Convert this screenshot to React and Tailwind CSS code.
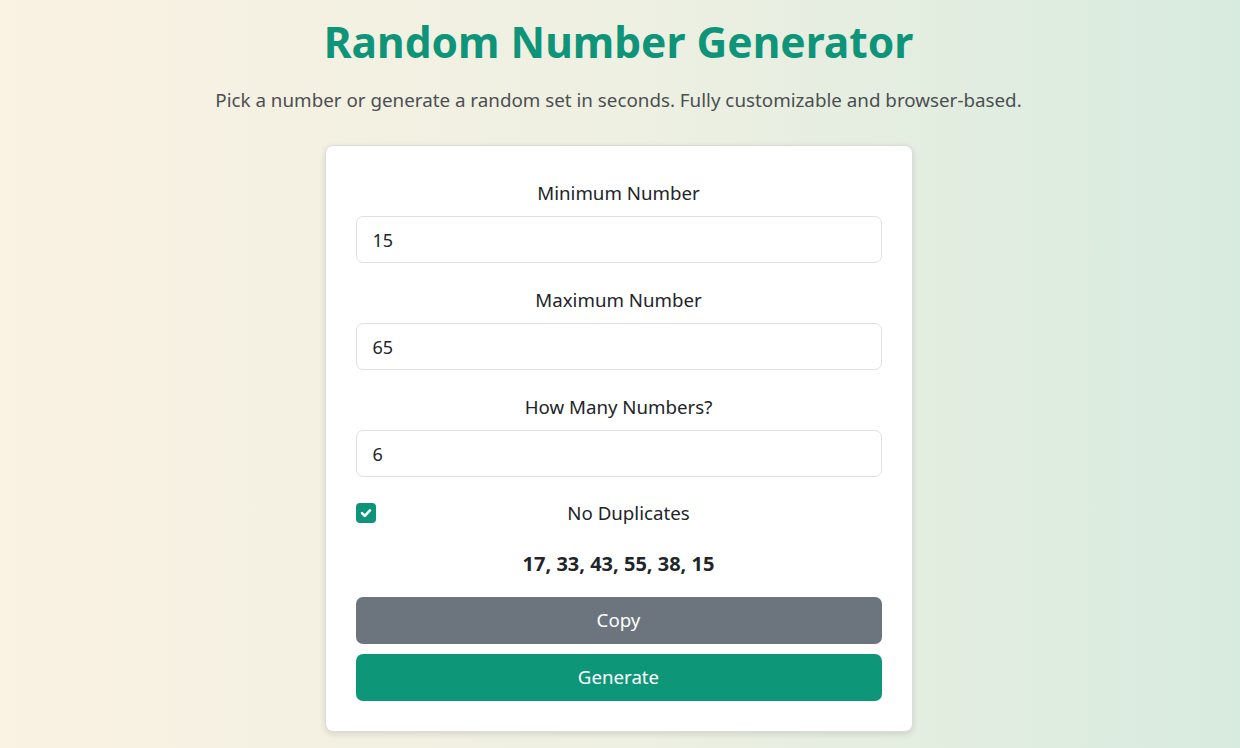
import React, { useState } from 'react';

function Field({ label, value, onChange }) {
  return (
    <div className="flex flex-col">
      <label className="text-center text-[18.7px] leading-[27px] text-[#212529] mb-[10px]">{label}</label>
      <input
        type="number"
        value={value}
        onChange={(e) => onChange(e.target.value)}
        className="h-[47px] w-full px-4 text-[18px] text-[#212529] bg-white border border-[#dee2e6] rounded-[7px] focus:outline-none"
      />
    </div>
  );
}

export default function App() {
  const [min, setMin] = useState('15');
  const [max, setMax] = useState('65');
  const [count, setCount] = useState('6');
  const [noDup, setNoDup] = useState(true);
  const [result] = useState('17, 33, 43, 55, 38, 15');

  return (
    <div
      className="min-h-screen bg-gradient-to-r from-[#faf2e2] via-[#eef0e2] to-[#d8ebdf] flex flex-col items-center pr-[3px]"
      style={{ fontFamily: '"Noto Sans", "Open Sans", sans-serif' }}
    >
      <h1 className="mt-[12px] text-[42.5px] leading-[60px] font-bold text-[#0e9479]">Random Number Generator</h1>
      <p className="mt-[15px] text-[18.8px] leading-[27px] text-[#4b4f52]">
        Pick a number or generate a random set in seconds. Fully customizable and browser-based.
      </p>

      <div className="mt-[31px] w-[588px] bg-white border border-[#dcdcdc] rounded-[8px] shadow-[0_2px_6px_rgba(0,0,0,0.12)] px-[30px] pt-[33px] pb-[30px]">
        <div className="flex flex-col gap-[23px]">
          <Field label="Minimum Number" value={min} onChange={setMin} />
          <Field label="Maximum Number" value={max} onChange={setMax} />
          <Field label="How Many Numbers?" value={count} onChange={setCount} />
        </div>

        <div className="mt-[22px] flex items-center">
          <button
            onClick={() => setNoDup(!noDup)}
            className={`w-[20px] h-[20px] rounded-[4px] flex items-center justify-center ${noDup ? 'bg-[#0e9479]' : 'bg-white border border-[#bbb]'}`}
          >
            {noDup && (
              <svg width="14" height="14" viewBox="0 0 12 12" fill="none">
                <path d="M2.6 6.2 L5 8.5 L9.4 3.8" stroke="white" strokeWidth="2.2" strokeLinecap="round" strokeLinejoin="round" />
              </svg>
            )}
          </button>
          <span className="flex-1 text-center text-[18.7px] leading-[27px] text-[#212529]">No Duplicates</span>
        </div>

        <p className="mt-[24px] text-center text-[20px] leading-[27px] font-bold text-[#212529]">{result}</p>

        <button className="mt-[20px] w-full h-[47px] rounded-[7px] bg-[#6c757d] text-white text-[18.7px]">Copy</button>
        <button className="mt-[10px] w-full h-[47px] rounded-[7px] bg-[#0e9679] text-white text-[18.7px]">Generate</button>
      </div>
    </div>
  );
}
